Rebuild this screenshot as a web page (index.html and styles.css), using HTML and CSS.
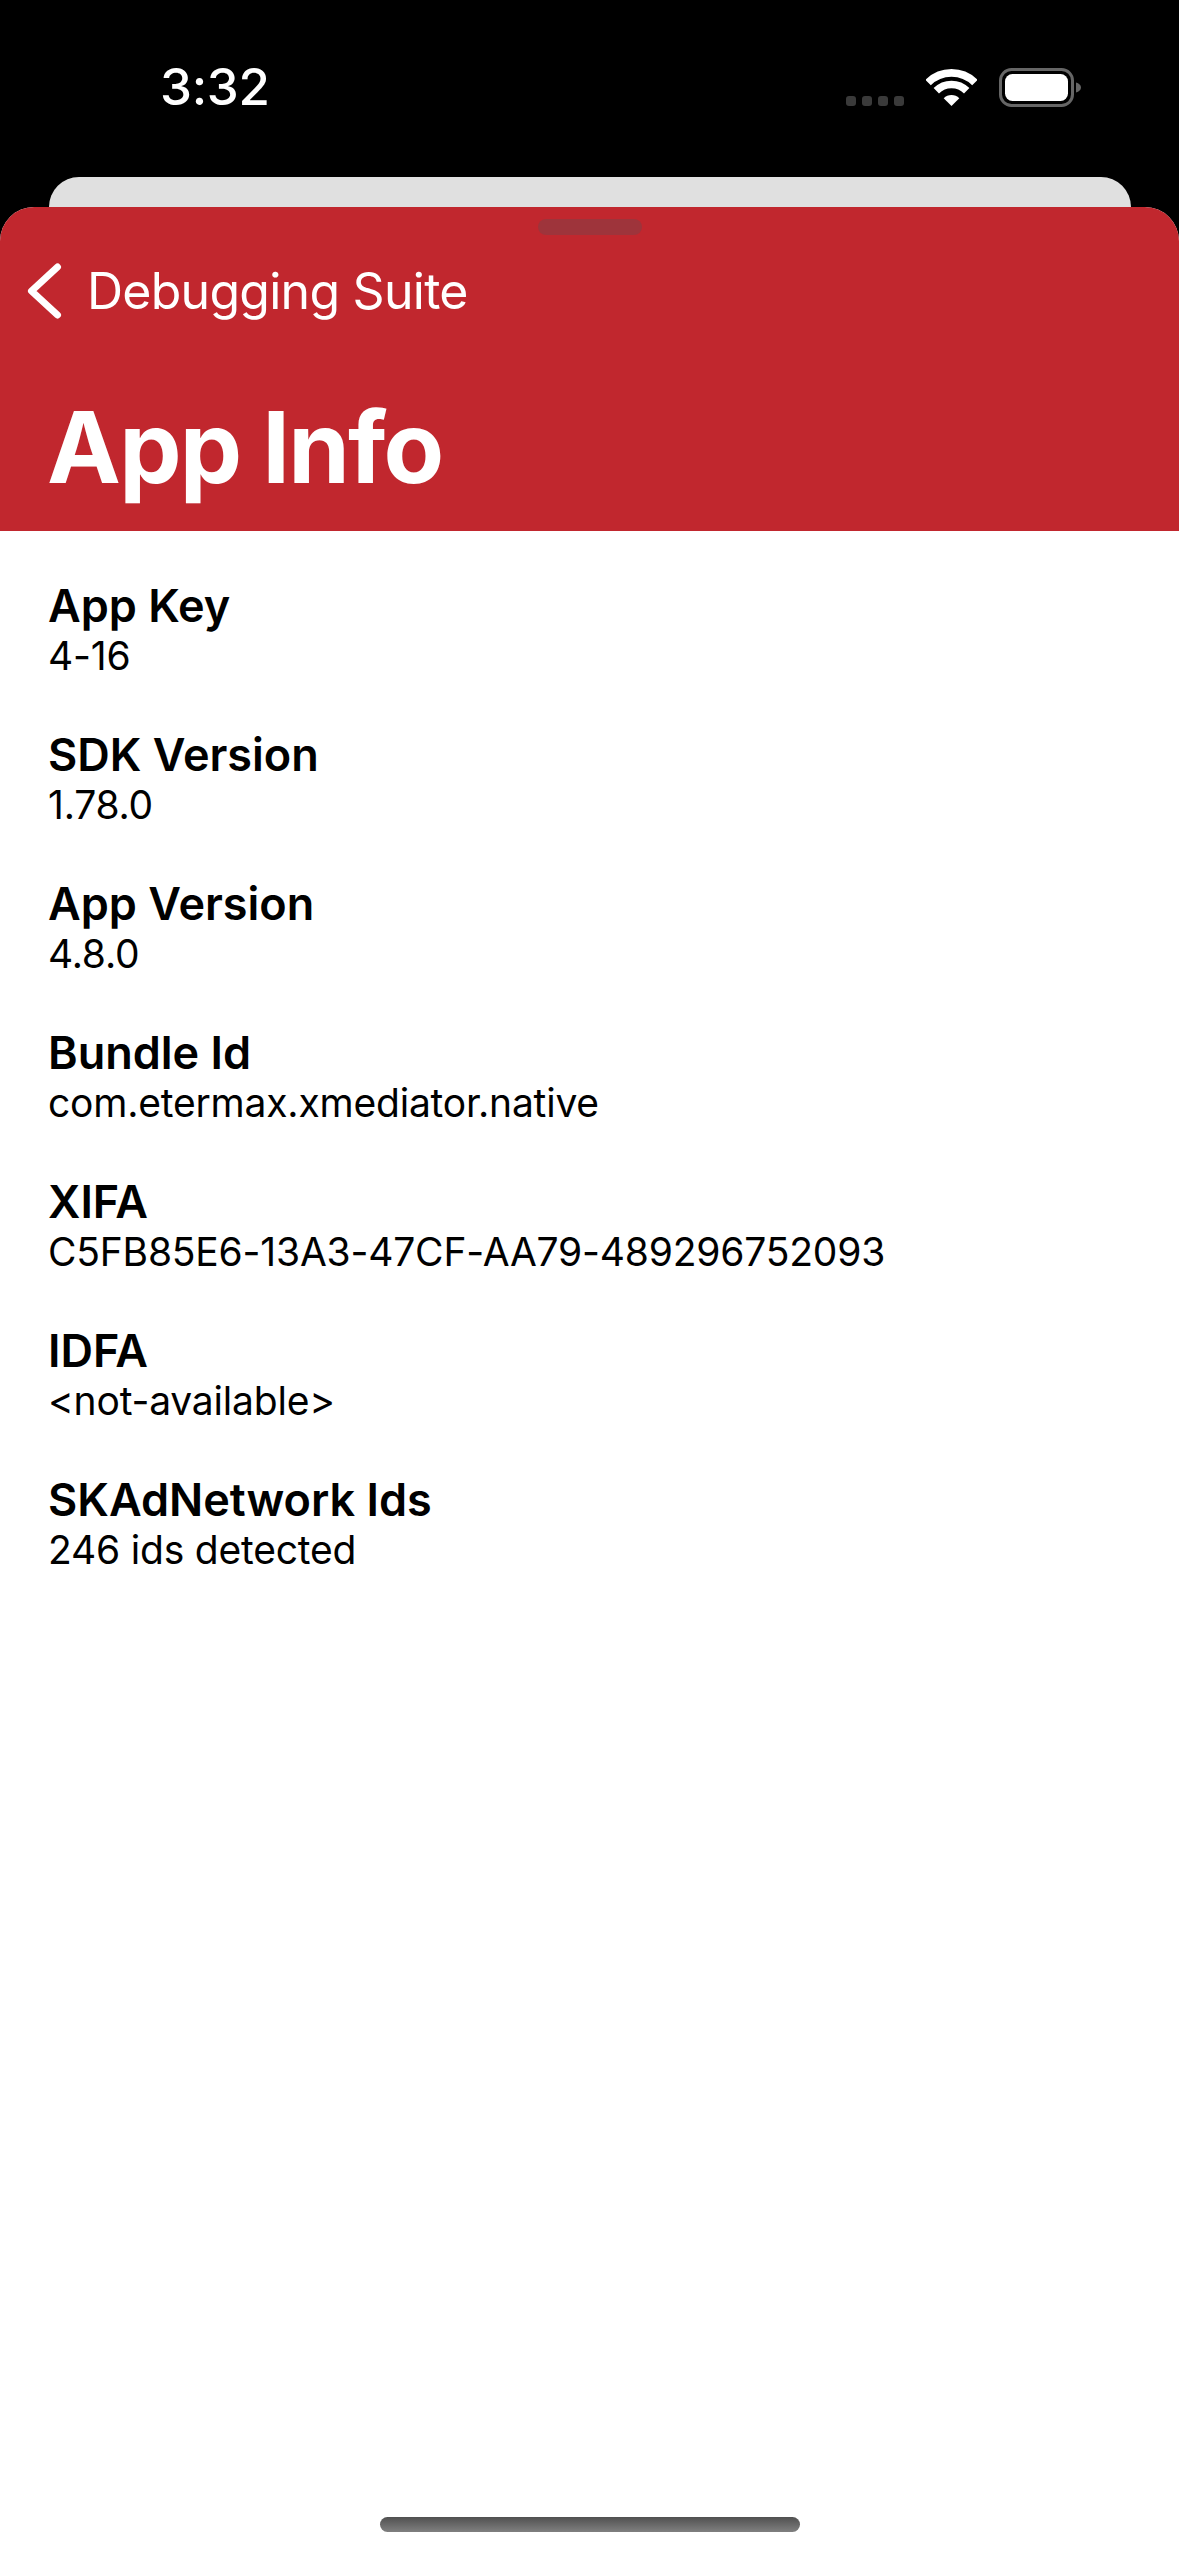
FILE: index.html
```html
<!DOCTYPE html>
<html lang="en">
<head>
<meta charset="utf-8">
<title>App Info</title>
<link rel="stylesheet" href="styles.css">
</head>
<body>
<div class="status">
  <span class="time">3:32</span>
  <div class="status-icons">
    <div class="dots"><i></i><i></i><i></i><i></i></div>
    <svg class="wifi" width="51" height="37" viewBox="0 0 51 37"><path d="M2.1 13.6A33.15 33.15 0 0 1 48.9 13.6" fill="none" stroke="#fff" stroke-width="7.7"/><path d="M10.3 21.8A21.5 21.5 0 0 1 40.7 21.8" fill="none" stroke="#fff" stroke-width="7.6"/><path d="M25.5 37L17.7 29.2A11 11 0 0 1 33.3 29.2Z" fill="#fff"/></svg>
    <svg class="battery" width="82" height="39" viewBox="0 0 82 39"><rect x="1.5" y="1.5" width="72" height="36" rx="11" fill="none" stroke="#666" stroke-width="3"/><rect x="6" y="6" width="63" height="27" rx="7.5" fill="#fff"/><path d="M77 14.5C80 15.5 82 17 82 19.5C82 22 80 23.5 77 24.5Z" fill="#666"/></svg>
  </div>
</div>
<div class="back-card"></div>
<main class="sheet">
  <span class="grabber"></span>
  <header class="header">
    <div class="nav">
      <svg class="chevron" width="36" height="56" viewBox="0 0 36 56"><path d="M31.5 4L5.5 28L31.5 52" fill="none" stroke="#fff" stroke-width="7" stroke-linecap="round" stroke-linejoin="round"/></svg>
      <span class="back-label">Debugging Suite</span>
    </div>
    <h1 class="title">App Info</h1>
  </header>
  <div class="content">
    <section class="row"><h2 class="label">App Key</h2><p class="value">4-16</p></section>
    <section class="row"><h2 class="label">SDK Version</h2><p class="value">1.78.0</p></section>
    <section class="row"><h2 class="label">App Version</h2><p class="value">4.8.0</p></section>
    <section class="row"><h2 class="label">Bundle Id</h2><p class="value">com.etermax.xmediator.native</p></section>
    <section class="row"><h2 class="label">XIFA</h2><p class="value">C5FB85E6-13A3-47CF-AA79-489296752093</p></section>
    <section class="row"><h2 class="label">IDFA</h2><p class="value">&lt;not-available&gt;</p></section>
    <section class="row"><h2 class="label">SKAdNetwork Ids</h2><p class="value">246 ids detected</p></section>
  </div>
  <span class="home-indicator"></span>
</main>
</body>
</html>
```
FILE: styles.css
```css
* { box-sizing: border-box; }
html, body { margin: 0; height: 100%; }
body {
  width: 1179px;
  height: 2556px;
  background: #000;
  font-family: Inter, "Liberation Sans", sans-serif;
  display: flex;
  flex-direction: column;
  overflow: hidden;
}
.status {
  height: 177px;
  flex: none;
  display: flex;
  align-items: flex-start;
  justify-content: space-between;
  padding: 0 98px 0 160px;
  color: #fff;
}
.time {
  font-size: 51px;
  font-weight: 500;
  line-height: 60px;
  letter-spacing: -0.3px;
  margin-top: 57px;
}
.status-icons { display: flex; align-items: flex-start; margin-top: 68px; }
.dots { display: flex; gap: 6px; margin-top: 28px; margin-right: 22px; }
.dots i { width: 10px; height: 10px; border-radius: 3px; background: #3a3a3a; display: block; }
.wifi { margin-top: 1px; margin-right: 22px; }
.back-card {
  height: 30px;
  flex: none;
  margin: 0 48.5px;
  background: #e0e0e0;
  border-radius: 30px 30px 0 0;
}
.sheet {
  position: relative;
  flex: 1;
  background: #fff;
  border-radius: 34px 34px 0 0;
  overflow: hidden;
  display: flex;
  flex-direction: column;
}
.grabber {
  position: absolute;
  top: 12px;
  left: 538px;
  width: 104px;
  height: 16px;
  border-radius: 8px;
  background: #9e343b;
}
.header {
  background: #c1272e;
  height: 324px;
  flex: none;
  color: #fff;
  padding: 52px 0 0 26px;
}
.nav { display: flex; align-items: center; height: 64px; }
.chevron { margin-right: 25px; }
.back-label { font-size: 50px; font-weight: 400; line-height: 64px; letter-spacing: -0.75px; }
.title {
  margin: 64px 0 0 21px;
  font-size: 99px;
  font-weight: 700;
  line-height: 120px;
  letter-spacing: -1.75px;
}
.content { padding: 48px 48px 0; }
.row { height: 149px; }
.label { margin: 0; font-size: 45px; font-weight: 600; line-height: 54px; color: #000; }
.value { margin: 0; font-size: 39px; font-weight: 400; line-height: 46px; color: #000; letter-spacing: -0.2px; }
.home-indicator {
  position: absolute;
  left: 380px;
  bottom: 24px;
  width: 420px;
  height: 15px;
  border-radius: 8px;
  background: linear-gradient(#505050, #808080);
}
```
